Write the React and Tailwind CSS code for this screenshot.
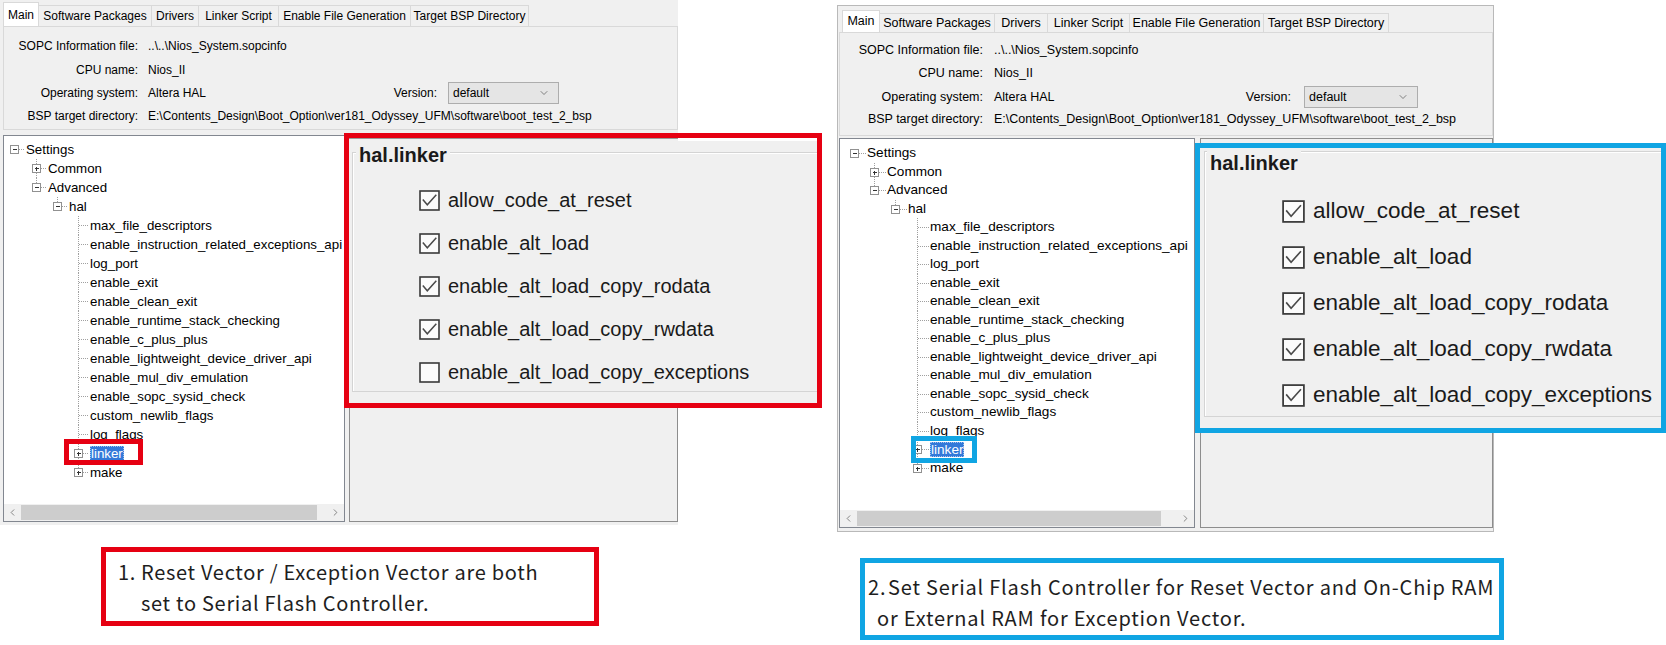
import { ChevronDown, ChevronLeft, ChevronRight } from "lucide-react";

const UI = "font-['Liberation_Sans',Arial,sans-serif]";
const CAP = "font-['Noto_Sans_CJK_JP','Noto_Sans',sans-serif]";

const TABS = ["Main", "Software Packages", "Drivers", "Linker Script", "Enable File Generation", "Target BSP Directory"];

const LEAVES = [
  "max_file_descriptors",
  "enable_instruction_related_exceptions_api",
  "log_port",
  "enable_exit",
  "enable_clean_exit",
  "enable_runtime_stack_checking",
  "enable_c_plus_plus",
  "enable_lightweight_device_driver_api",
  "enable_mul_div_emulation",
  "enable_sopc_sysid_check",
  "custom_newlib_flags",
  "log_flags",
];

const TREE = [
  { level: 0, label: "Settings", box: "minus", root: true },
  { level: 1, label: "Common", box: "plus" },
  { level: 1, label: "Advanced", box: "minus", last: true },
  { level: 2, label: "hal", box: "minus", last: true },
  ...LEAVES.map((label) => ({ level: 3, label })),
  { level: 3, label: "linker", box: "plus", selected: true },
  { level: 3, label: "make", box: "plus", last: true },
];

const OPTIONS = [
  "allow_code_at_reset",
  "enable_alt_load",
  "enable_alt_load_copy_rodata",
  "enable_alt_load_copy_rwdata",
  "enable_alt_load_copy_exceptions",
];

// tree connector: dotted lines + expand box
const Connector = ({ w, h, box, root, last }) => {
  const cy = Math.floor(h / 2) + 0.5;
  return (
    <svg width={w} height={h} viewBox={`0 0 ${w} ${h}`} className="shrink-0">
      <g stroke="#a0a0a0" strokeWidth="1" strokeDasharray="1 1" shapeRendering="crispEdges">
        {!root && <line x1="4.5" y1="0" x2="4.5" y2={last ? cy : h} />}
        <line x1="4.5" y1={cy} x2={w - 1} y2={cy} />
      </g>
      {box && (
        <g shapeRendering="crispEdges">
          <rect x="0.5" y={cy - 4} width="8" height="8" fill="#fff" stroke="#919191" />
          <line x1="2.5" x2="6.5" y1={cy} y2={cy} stroke="#333" />
          {box === "plus" && <line x1="4.5" x2="4.5" y1={cy - 2} y2={cy + 2} stroke="#333" />}
        </g>
      )}
    </svg>
  );
};

const CheckBox = ({ size, on }) => (
  <svg width={size} height={size} viewBox="0 0 21 21" className="shrink-0">
    <rect x="1" y="1" width="19" height="19" fill="#fbfbfb" stroke="#3a3a3a" strokeWidth="1.6" />
    {on && <path d="M3.8 9.5 L8.3 14.8 L17.3 4.8" fill="none" stroke="#4a4a4a" strokeWidth="1.5" />}
  </svg>
);

const BspEditor = ({ s }) => (
  <div className={`${UI} flex flex-col shrink-0 bg-[#f0f0f0] text-black ${s.frame}`}>
    <div className={`flex items-end ${s.tabRow}`}>
      {TABS.map((t, i) => (
        <div
          key={t}
          className={`flex items-center justify-center whitespace-nowrap border-t border-r border-[#d9d9d9] ${s.tabW[i]} ${
            i === 0 ? `border-l bg-white ${s.tabOn}` : s.tabOff
          }`}
        >
          {t}
        </div>
      ))}
    </div>

    <div className={`flex flex-col border border-[#d9d9d9] whitespace-nowrap ${s.info}`}>
      <div className={`flex items-center ${s.rows[0]}`}>
        <span className={`text-right shrink-0 ${s.lab}`}>SOPC Information file:</span>
        <span className={s.val}>..\..\Nios_System.sopcinfo</span>
      </div>
      <div className={`flex items-center ${s.rows[1]}`}>
        <span className={`text-right shrink-0 ${s.lab}`}>CPU name:</span>
        <span className={s.val}>Nios_II</span>
      </div>
      <div className={`flex items-center ${s.rows[2]}`}>
        <span className={`text-right shrink-0 ${s.lab}`}>Operating system:</span>
        <span className={`flex justify-between shrink-0 ${s.val} ${s.osW}`}>
          <span>Altera HAL</span>
          <span>Version:</span>
        </span>
        <div className={`flex items-center justify-between h-full bg-[#e5e5e5] border border-[#adadad] pl-[4px] pr-[8px] ${s.drop}`}>
          <span>default</span>
          <ChevronDown size={12} strokeWidth={1.4} color="#555" />
        </div>
      </div>
      <div className={`flex items-center ${s.rows[3]}`}>
        <span className={`text-right shrink-0 ${s.lab}`}>BSP target directory:</span>
        <span className={s.val}>E:\Contents_Design\Boot_Option\ver181_Odyssey_UFM\software\boot_test_2_bsp</span>
      </div>
    </div>

    <div className={`flex flex-1 min-h-0 ${s.split}`}>
      <div className={`flex flex-col bg-white border border-[#828790] overflow-hidden shrink-0 ${s.treeW}`}>
        <div className={`flex-1 min-h-0 whitespace-nowrap ${s.treeText} ${s.treePad}`}>
          {TREE.map((n) => (
            <div key={n.label} className={`flex items-center ${s.rowH} ${s.pads[n.level]}`}>
              <Connector w={s.cw} h={s.rowPx} box={n.box} root={n.root} last={n.last} />
              {n.selected ? (
                <span className="bg-[#3379d9] text-white px-px leading-[15px] outline outline-1 outline-dotted outline-[#9fc2ef] -outline-offset-1">
                  {n.label}
                </span>
              ) : (
                <span>{n.label}</span>
              )}
            </div>
          ))}
        </div>
        <div className="flex items-center h-[17px] bg-[#f0f0f0]">
          <span className="flex items-center justify-center w-[17px]">
            <ChevronLeft size={11} strokeWidth={1.6} color="#606060" />
          </span>
          <span className={`h-[15px] bg-[#cdcdcd] ${s.thumb}`} />
          <span className="flex-1" />
          <span className="flex items-center justify-center w-[17px]">
            <ChevronRight size={11} strokeWidth={1.6} color="#606060" />
          </span>
        </div>
      </div>
      <div className={`flex-1 bg-[#f0f0f0] border border-[#8d8d8d] ${s.rightGap}`} />
    </div>
  </div>
);

const LinkerPanel = ({ s, checks }) => (
  <div className={`${UI} flex flex-col h-full bg-[#f0f0f0] text-[#1a1a1a]`}>
    {s.strip && (
      <div className="flex h-[3px]">
        <div className="w-[329px] border-t border-[#9a9a9a]" />
        <div className="flex-1 bg-white" />
      </div>
    )}
    <div className={`flex flex-col border-l border-t border-b border-[#d4d4d4] shadow-[inset_1px_1px_0_#ffffff] ${s.group}`}>
      <div className={`w-fit bg-[#f0f0f0] px-[3px] font-bold text-[20px] ${s.title}`}>hal.linker</div>
      <div className={`flex flex-col ${s.list}`}>
        {OPTIONS.map((o, i) => (
          <div key={o} className={`flex items-center ${s.row}`}>
            <CheckBox size={s.box} on={checks[i]} />
            <span className="whitespace-nowrap">{o}</span>
          </div>
        ))}
      </div>
    </div>
  </div>
);

const LEFT = {
  frame: "w-[678px] h-[525px] pb-[3px]",
  tabRow: "h-[26px] pt-[2px] pl-[3px] text-[12px]",
  tabW: ["w-[36px]", "w-[113px]", "w-[47px]", "w-[80px]", "w-[132px]", "w-[118px]"],
  tabOn: "h-[24px]",
  tabOff: "h-[21px]",
  info: "ml-[3px] h-[104px] text-[12px]",
  rows: ["mt-[8px] h-[22px]", "mt-[2px] h-[22px]", "mt-px h-[22px]", "mt-[2px] h-[20px]"],
  lab: "w-[134px]",
  val: "ml-[10px]",
  osW: "w-[289px]",
  drop: "ml-[11px] w-[111px]",
  split: "mt-[5px]",
  treeW: "ml-[3px] w-[342px]",
  treeText: "text-[13.3px]",
  treePad: "pt-[4px]",
  rowH: "h-[19px]",
  rowPx: 19,
  pads: ["pl-[6px]", "pl-[28px]", "pl-[49px]", "pl-[70px]"],
  cw: 16,
  thumb: "w-[296px]",
  rightGap: "ml-[4px]",
};

const RIGHT = {
  frame: "w-[657px] h-[527px] mt-[5px] ml-[159px] border border-[#b9b9b9] pb-[3px]",
  tabRow: "h-[26px] pt-[4px] pl-[4px] text-[12.5px]",
  tabW: ["w-[38px]", "w-[115px]", "w-[53px]", "w-[82px]", "w-[134px]", "w-[125px]"],
  tabOn: "h-[22px]",
  tabOff: "h-[19px]",
  info: "ml-px h-[104px] text-[12.5px]",
  rows: ["mt-[6px] h-[22px]", "mt-px h-[22px]", "mt-[2px] h-[22px]", "mt-px h-[20px]"],
  lab: "w-[143px]",
  val: "ml-[11px]",
  osW: "w-[297px]",
  drop: "ml-[13px] w-[114px]",
  split: "mt-[2px]",
  treeW: "ml-px w-[356px]",
  treeText: "text-[13.6px]",
  treePad: "pt-[5px]",
  rowH: "h-[18.5px]",
  rowPx: 18.5,
  pads: ["pl-[10px]", "pl-[30px]", "pl-[51px]", "pl-[73px]"],
  cw: 17,
  thumb: "w-[304px]",
  rightGap: "ml-[5px]",
};

const LEFT_PANEL = {
  strip: true,
  group: "ml-[3px] mt-[11px]",
  title: "-mt-[9px] ml-[3px] leading-[22px]",
  list: "mt-[15px] gap-[5px] pl-[66px] text-[20px]",
  row: "h-[38px] gap-[8px]",
  box: 21,
};

const RIGHT_PANEL = {
  strip: false,
  group: "ml-[4px] mt-[3px]",
  title: "-mt-[1px] ml-[2px] leading-[25px]",
  list: "mt-[14px] gap-[4px] pl-[77px] text-[22.5px]",
  row: "h-[42px] gap-[8px]",
  box: 23,
};

export default function App() {
  return (
    <div className="relative w-[1666px] h-[645px] bg-white overflow-hidden">
      <div className="flex items-start">
        <BspEditor s={LEFT} />
        <BspEditor s={RIGHT} />
      </div>

      <div className={`${CAP} flex items-start text-[20px] leading-[31px] text-[#1e1e1e]`}>
        <div className="ml-[101px] mt-[15px] w-[498px] h-[79px] border-[5px] border-[#e60012] bg-white pl-[12px] pt-[4px] whitespace-nowrap tracking-[0.7px]">
          <div className="flex">
            <span className="w-[23px]">1.</span>
            <span>Reset Vector / Exception Vector are both</span>
          </div>
          <div className="pl-[23px]">set to Serial Flash Controller.</div>
        </div>
        <div className="ml-[261px] mt-[26px] w-[644px] h-[82px] border-[5px] border-[#10a5e3] bg-white pl-[3px] pt-[8px] whitespace-nowrap tracking-[0.8px]">
          <div className="flex">
            <span className="w-[20px]">2.</span>
            <span>Set Serial Flash Controller for Reset Vector and On-Chip RAM</span>
          </div>
          <div className="pl-[9px]">or External RAM for Exception Vector.</div>
        </div>
      </div>

      {/* callouts */}
      <div className="absolute left-[344px] top-[133px] w-[478px] h-[275px] border-[5px] border-[#e60012]">
        <LinkerPanel s={LEFT_PANEL} checks={[true, true, true, true, false]} />
      </div>
      <div className="absolute left-[64px] top-[439px] w-[79px] h-[26px] border-[5px] border-[#e60012]" />
      <div className="absolute left-[1195px] top-[143px] w-[471px] h-[290px] border-[5px] border-[#10a5e3]">
        <LinkerPanel s={RIGHT_PANEL} checks={[true, true, true, true, true]} />
      </div>
      <div className="absolute left-[911px] top-[436px] w-[66px] h-[27px] border-[5px] border-[#10a5e3]" />
    </div>
  );
}
